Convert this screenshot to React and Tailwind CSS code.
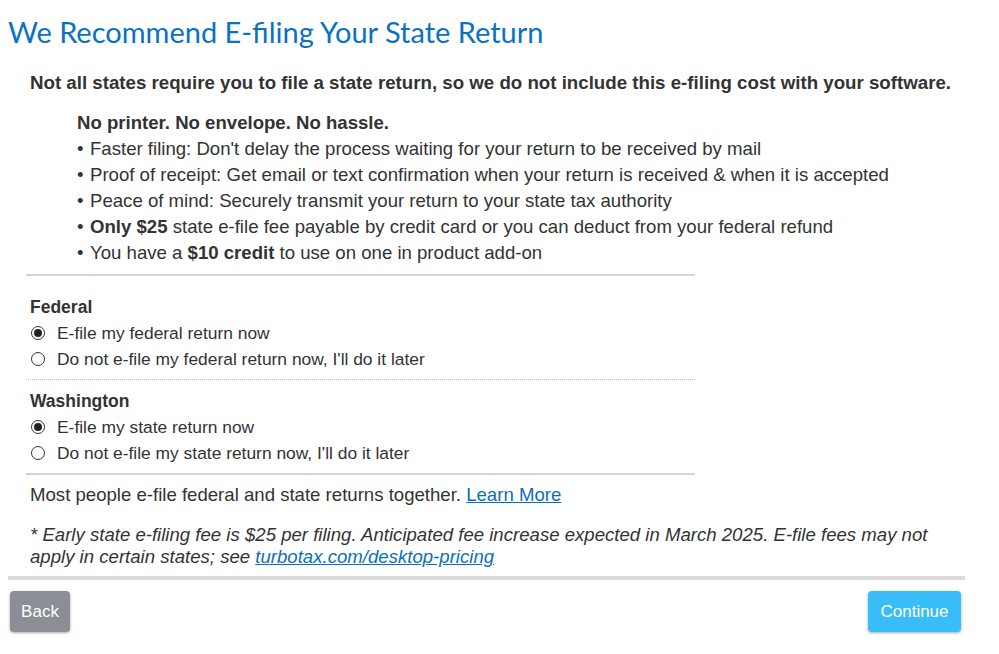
import React from "react";

function Radio({ checked, label }) {
  return (
    <div className="flex items-center h-[26px]">
      <span className="w-[14px] h-[14px] rounded-full border border-[#333] flex items-center justify-center bg-white ml-[1px]">
        {checked && <span className="w-[8px] h-[8px] rounded-full bg-[#222]" />}
      </span>
      <span className="ml-[12px] text-[17.4px] text-[#333]">{label}</span>
    </div>
  );
}

export default function App() {
  return (
    <div
      className="w-[999px] h-[654px] bg-white text-[#333] overflow-hidden"
      style={{ fontFamily: '"Liberation Sans", Arial, sans-serif' }}
    >
      <h1
        className="pl-[8px] pt-[14px] text-[29px] leading-[36px] text-[#0b72c2]"
        style={{ fontFamily: 'Lato, "Open Sans", sans-serif' }}
      >
        We Recommend E-filing Your State Return
      </h1>

      <p className="pl-[30px] mt-[21px] text-[18.7px] leading-[24px] font-bold">
        Not all states require you to file a state return, so we do not include this e-filing cost with your software.
      </p>

      <div className="pl-[77px] mt-[15px] text-[18.6px] leading-[26px]">
        <p className="font-bold">No printer. No envelope. No hassle.</p>
        <ul>
          <li className="flex"><span className="w-[13px]">•</span><span>Faster filing: Don't delay the process waiting for your return to be received by mail</span></li>
          <li className="flex"><span className="w-[13px]">•</span><span>Proof of receipt: Get email or text confirmation when your return is received &amp; when it is accepted</span></li>
          <li className="flex"><span className="w-[13px]">•</span><span>Peace of mind: Securely transmit your return to your state tax authority</span></li>
          <li className="flex"><span className="w-[13px]">•</span><span><b>Only $25</b> state e-file fee payable by credit card or you can deduct from your federal refund</span></li>
          <li className="flex"><span className="w-[13px]">•</span><span>You have a <b>$10 credit</b> to use on one in product add-on</span></li>
        </ul>
      </div>

      <div className="ml-[26px] w-[669px] mt-[8px] border-t-2 border-[#d4d4d4]" />

      <div className="pl-[30px] pt-[19px]">
        <p className="font-bold text-[17.5px] leading-[25px]">Federal</p>
        <Radio checked label="E-file my federal return now" />
        <Radio label="Do not e-file my federal return now, I'll do it later" />
      </div>

      <div className="ml-[26px] w-[669px] mt-[7px] border-t border-dotted border-[#bbb]" />

      <div className="pl-[30px] pt-[9px]">
        <p className="font-bold text-[17.5px] leading-[25px]">Washington</p>
        <Radio checked label="E-file my state return now" />
        <Radio label="Do not e-file my state return now, I'll do it later" />
      </div>

      <div className="ml-[26px] w-[669px] mt-[7px] border-t-2 border-[#d4d4d4]" />

      <p className="pl-[30px] mt-[8px] text-[18.6px] leading-[24px]">
        Most people e-file federal and state returns together.{" "}
        <a href="#" className="text-[#0b6fb8] underline">Learn More</a>
      </p>

      <p className="pl-[30px] pr-[50px] mt-[17px] text-[18.6px] leading-[22px] italic">
        * Early state e-filing fee is $25 per filing. Anticipated fee increase expected in March 2025. E-file fees may not apply in certain states; see{" "}
        <a href="#" className="text-[#0b6fb8] underline">turbotax.com/desktop-pricing</a>
      </p>

      <div className="ml-[8px] w-[957px] mt-[8px] border-t-4 border-[#dcdcdc]" />

      <div className="flex justify-between pl-[10px] pr-[38px] mt-[11px]">
        <button className="h-[41px] w-[60px] rounded-[4px] bg-[#8b8e95] text-white text-[17px] shadow-[0_1px_3px_rgba(0,0,0,0.35)]">
          Back
        </button>
        <button className="h-[41px] w-[93px] rounded-[4px] bg-[#38bdf8] text-white text-[17px] shadow-[0_1px_3px_rgba(0,0,0,0.35)]">
          Continue
        </button>
      </div>
    </div>
  );
}
